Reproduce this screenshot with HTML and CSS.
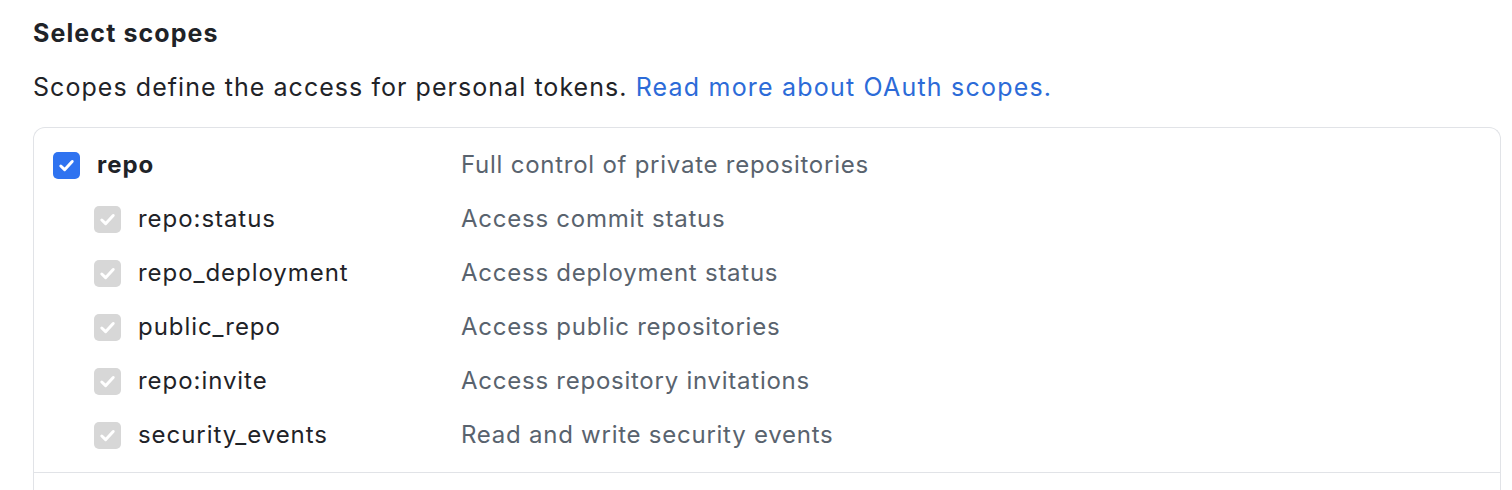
FILE: index.html
```html
<!DOCTYPE html>
<html>
<head>
<meta charset="utf-8">
<link rel="stylesheet" href="styles.css">
</head>
<body>
<div class="page">
  <h2 class="title">Select scopes</h2>
  <p class="lead">Scopes define the access for personal tokens. <a class="link" href="#">Read more about OAuth scopes.</a></p>
  <div class="box">
    <div class="group">
      <div class="row main">
        <div class="left">
          <span class="cb cb-on"><svg viewBox="0 0 16 16" width="19" height="19"><path d="M3.2 8.4 6.4 11.5 12.8 4.6" fill="none" stroke="#fff" stroke-width="2.5" stroke-linecap="round" stroke-linejoin="round"/></svg></span>
          <span class="name bold">repo</span>
        </div>
        <span class="desc">Full control of private repositories</span>
      </div>
      <div class="row sub">
        <div class="left">
          <span class="cb cb-dis"><svg viewBox="0 0 16 16" width="19" height="19"><path d="M3.2 8.4 6.4 11.5 12.8 4.6" fill="none" stroke="#fff" stroke-width="2.5" stroke-linecap="round" stroke-linejoin="round"/></svg></span>
          <span class="name">repo:status</span>
        </div>
        <span class="desc">Access commit status</span>
      </div>
      <div class="row sub">
        <div class="left">
          <span class="cb cb-dis"><svg viewBox="0 0 16 16" width="19" height="19"><path d="M3.2 8.4 6.4 11.5 12.8 4.6" fill="none" stroke="#fff" stroke-width="2.5" stroke-linecap="round" stroke-linejoin="round"/></svg></span>
          <span class="name">repo_deployment</span>
        </div>
        <span class="desc">Access deployment status</span>
      </div>
      <div class="row sub">
        <div class="left">
          <span class="cb cb-dis"><svg viewBox="0 0 16 16" width="19" height="19"><path d="M3.2 8.4 6.4 11.5 12.8 4.6" fill="none" stroke="#fff" stroke-width="2.5" stroke-linecap="round" stroke-linejoin="round"/></svg></span>
          <span class="name">public_repo</span>
        </div>
        <span class="desc">Access public repositories</span>
      </div>
      <div class="row sub">
        <div class="left">
          <span class="cb cb-dis"><svg viewBox="0 0 16 16" width="19" height="19"><path d="M3.2 8.4 6.4 11.5 12.8 4.6" fill="none" stroke="#fff" stroke-width="2.5" stroke-linecap="round" stroke-linejoin="round"/></svg></span>
          <span class="name">repo:invite</span>
        </div>
        <span class="desc">Access repository invitations</span>
      </div>
      <div class="row sub">
        <div class="left">
          <span class="cb cb-dis"><svg viewBox="0 0 16 16" width="19" height="19"><path d="M3.2 8.4 6.4 11.5 12.8 4.6" fill="none" stroke="#fff" stroke-width="2.5" stroke-linecap="round" stroke-linejoin="round"/></svg></span>
          <span class="name">security_events</span>
        </div>
        <span class="desc">Read and write security events</span>
      </div>
    </div>
    <div class="group next"></div>
  </div>
</div>
</body>
</html>
```
FILE: styles.css
```css
html, body {
  margin: 0;
  padding: 0;
  background: #ffffff;
  overflow: hidden;
}
.page {
  padding: 15px 11px 0 33px;
  font-family: Inter, "Noto Sans", sans-serif;
  font-size: 24px;
  line-height: 36px;
  color: #1f2328;
}
.title {
  margin: 0;
  font-size: 25px;
  font-weight: 700;
  line-height: 36px;
  letter-spacing: 1.1px;
}
.lead {
  margin: 18px 0 22px 0;
  font-size: 25px;
  letter-spacing: 1.05px;
}
.link {
  color: #2c6bd8;
  text-decoration: none;
  letter-spacing: 1.2px;
}
.box {
  border: 1.5px solid #e1e3e7;
  border-bottom: none;
  border-radius: 12px 12px 0 0;
  height: 380px;
}
.group {
  padding: 10px 19px 10px 19px;
  border-bottom: 1.5px solid #e1e3e7;
}
.group.next {
  border-bottom: none;
}
.row {
  display: flex;
  align-items: center;
  height: 54px;
}
.left {
  display: flex;
  align-items: center;
  width: 408px;
  flex: none;
  gap: 17px;
}
.sub .left {
  padding-left: 41px;
  width: 367px;
}
.cb {
  width: 27px;
  height: 27px;
  border-radius: 5px;
  display: flex;
  align-items: center;
  justify-content: center;
  flex: none;
}
.cb-on {
  background: #2f73f0;
}
.cb-dis {
  background: #d7d7d7;
}
.name {
  letter-spacing: 0.95px;
}
.bold {
  font-weight: 700;
  letter-spacing: 1px;
}
.desc {
  color: #59636e;
  letter-spacing: 0.75px;
}
```
